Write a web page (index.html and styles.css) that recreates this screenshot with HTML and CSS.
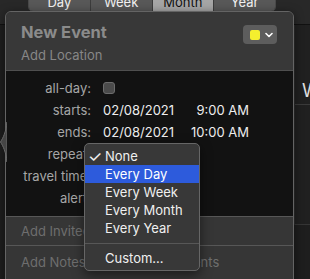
FILE: index.html
```html
<!DOCTYPE html>
<html lang="en">
<head>
  <meta charset="UTF-8" />
  <title>New Event</title>
  <link rel="stylesheet" href="styles.css">
</head>
<body>
  <div class="toolbar">
    <div class="segments">
      <span class="seg">Day</span>
      <span class="seg">Week</span>
      <span class="seg active">Month</span>
      <span class="seg">Year</span>
    </div>
  </div>
  <div class="calendar">
    <div class="day-col">
      <div class="day-head">Wed</div>
      <div class="day-cell"></div>
    </div>
  </div>

  <div class="popover">
    <div class="pop-head">
      <div>
        <div class="title">New Event</div>
        <div class="location">Add Location</div>
      </div>
      <button class="color-btn"><span class="swatch"></span>
        <svg width="8" height="6" viewBox="0 0 8 6"><path d="M1 1.5 L4 4.5 L7 1.5" fill="none" stroke="#fff" stroke-width="1.6" stroke-linecap="round" stroke-linejoin="round"/></svg>
      </button>
    </div>
    <div class="pop-body">
      <div class="row"><span class="label">all-day:</span><span class="value"><span class="check"></span></span></div>
      <div class="row"><span class="label">starts:</span><span class="value when"><span>02/08/2021</span><span>9:00 AM</span></span></div>
      <div class="row"><span class="label">ends:</span><span class="value when"><span>02/08/2021</span><span>10:00 AM</span></span></div>
      <div class="row"><span class="label">repeat:</span><span class="value"></span></div>
      <div class="row"><span class="label">travel time:</span><span class="value"></span></div>
      <div class="row"><span class="label">alert:</span><span class="value"></span></div>
    </div>
    <div class="pop-line">Add Invitees</div>
    <div class="pop-line">Add Notes, URL, or Attachments</div>
  </div>
  <svg class="arrow" width="7" height="40" viewBox="0 0 7 40">
    <path d="M7 0 C6 10 3 16 0.5 20 C3 24 6 30 7 40 Z" fill="#454545" stroke="#6a6a6a" stroke-width="1"/>
  </svg>

  <div class="menu">
    <div class="item"><span class="tick">✓</span>None</div>
    <div class="item selected">Every Day</div>
    <div class="item">Every Week</div>
    <div class="item">Every Month</div>
    <div class="item">Every Year</div>
    <div class="sep"></div>
    <div class="item">Custom...</div>
  </div>
</body>
</html>
```
FILE: styles.css
```css
html, body {
  height: 100%;
}
body {
  margin: 0;
  background: #1e1e1e;
  font-family: "Inter", "Roboto", sans-serif;
  font-size: 13px;
  color: #e6e6e6;
  overflow: hidden;
}
.toolbar {
  height: 24px;
  background: #282828;
  border-bottom: 1px solid #111;
}
.segments {
  display: flex;
  margin-left: 28px;
  position: relative;
  top: -9px;
  width: 246px;
  height: 19px;
  border: 1px solid #4a4a4a;
  border-radius: 5px;
  overflow: hidden;
}
.seg {
  flex: 1;
  display: flex;
  align-items: center;
  justify-content: center;
  background: #585858;
  border-right: 1px solid #3c3c3c;
  color: #f2f2f2;
}
.seg:last-child {
  border-right: none;
}
.seg.active {
  background: #a6a6a6;
  color: #111;
}
.calendar {
  display: flex;
  justify-content: flex-end;
}
.day-col {
  width: 15px;
  border-left: 1px solid #2e2e2e;
  background: #202020;
  overflow: hidden;
}
.day-head {
  height: 80px;
  border-bottom: 1px solid #3a3a3a;
  font-size: 18px;
  line-height: 18px;
  padding: 57px 0 0 7px;
  box-sizing: border-box;
  white-space: nowrap;
  color: #e0e0e0;
}
.day-cell {
  height: 119px;
  border-bottom: 1px solid #353535;
}

.popover {
  position: absolute;
  left: 5px;
  top: 11px;
  width: 287px;
  height: 272px;
  border: 1px solid #646464;
  border-radius: 6px;
  background: #363636;
  overflow: hidden;
  box-shadow: 0 2px 10px rgba(0,0,0,0.5);
}
.pop-head {
  display: flex;
  justify-content: space-between;
  align-items: flex-start;
  height: 59px;
  padding: 10px 16px 0 15px;
  box-sizing: border-box;
  background: #383838;
  border-bottom: 1px solid #4f4f4f;
}
.title {
  font-size: 16.5px;
  font-weight: bold;
  line-height: 20px;
  color: #8b8b8b;
}
.location {
  margin-top: 5px;
  line-height: 16px;
  color: #878787;
}
.color-btn {
  display: flex;
  align-items: center;
  gap: 5px;
  margin-top: 3px;
  width: 34px;
  height: 19px;
  padding: 0 0 0 7px;
  border: none;
  border-radius: 4px;
  background: #5d5d5d;
}
.swatch {
  width: 10px;
  height: 10px;
  border-radius: 2px;
  background: #f4ef2e;
}
.pop-body {
  background: #121212;
  padding: 6px 0 7px;
}
.row {
  display: flex;
  align-items: center;
  height: 22px;
}
.label {
  width: 85px;
  text-align: right;
  color: #a6a6a6;
}
.value {
  margin-left: 12px;
  color: #ededed;
}
.when {
  display: flex;
  justify-content: space-between;
  width: 146px;
}
.check {
  display: block;
  width: 10px;
  height: 10px;
  border: 1px solid #6c6c6c;
  border-radius: 3px;
  background: #4b4b4b;
}
.pop-line {
  height: 28px;
  line-height: 28px;
  padding-left: 15px;
  border-top: 1px solid #575757;
  color: #6e6e6e;
}
.pop-line:last-child {
  height: 32px;
  line-height: 32px;
}
.arrow {
  position: absolute;
  left: 0;
  top: 122px;
}

.menu {
  position: absolute;
  left: 84px;
  top: 143px;
  width: 114px;
  padding: 3px 0;
  border: 1px solid #666;
  border-radius: 5px;
  background: #383838;
  box-shadow: 0 4px 12px rgba(0,0,0,0.5);
}
.item {
  position: relative;
  height: 18px;
  line-height: 18px;
  padding-left: 20px;
  color: #f0f0f0;
}
.item.selected {
  background: #2d5bdc;
  color: #fff;
}
.tick {
  position: absolute;
  left: 3px;
  font-size: 16px;
}
.sep {
  height: 1px;
  margin: 6px 0 5px;
  background: #575757;
}
```
